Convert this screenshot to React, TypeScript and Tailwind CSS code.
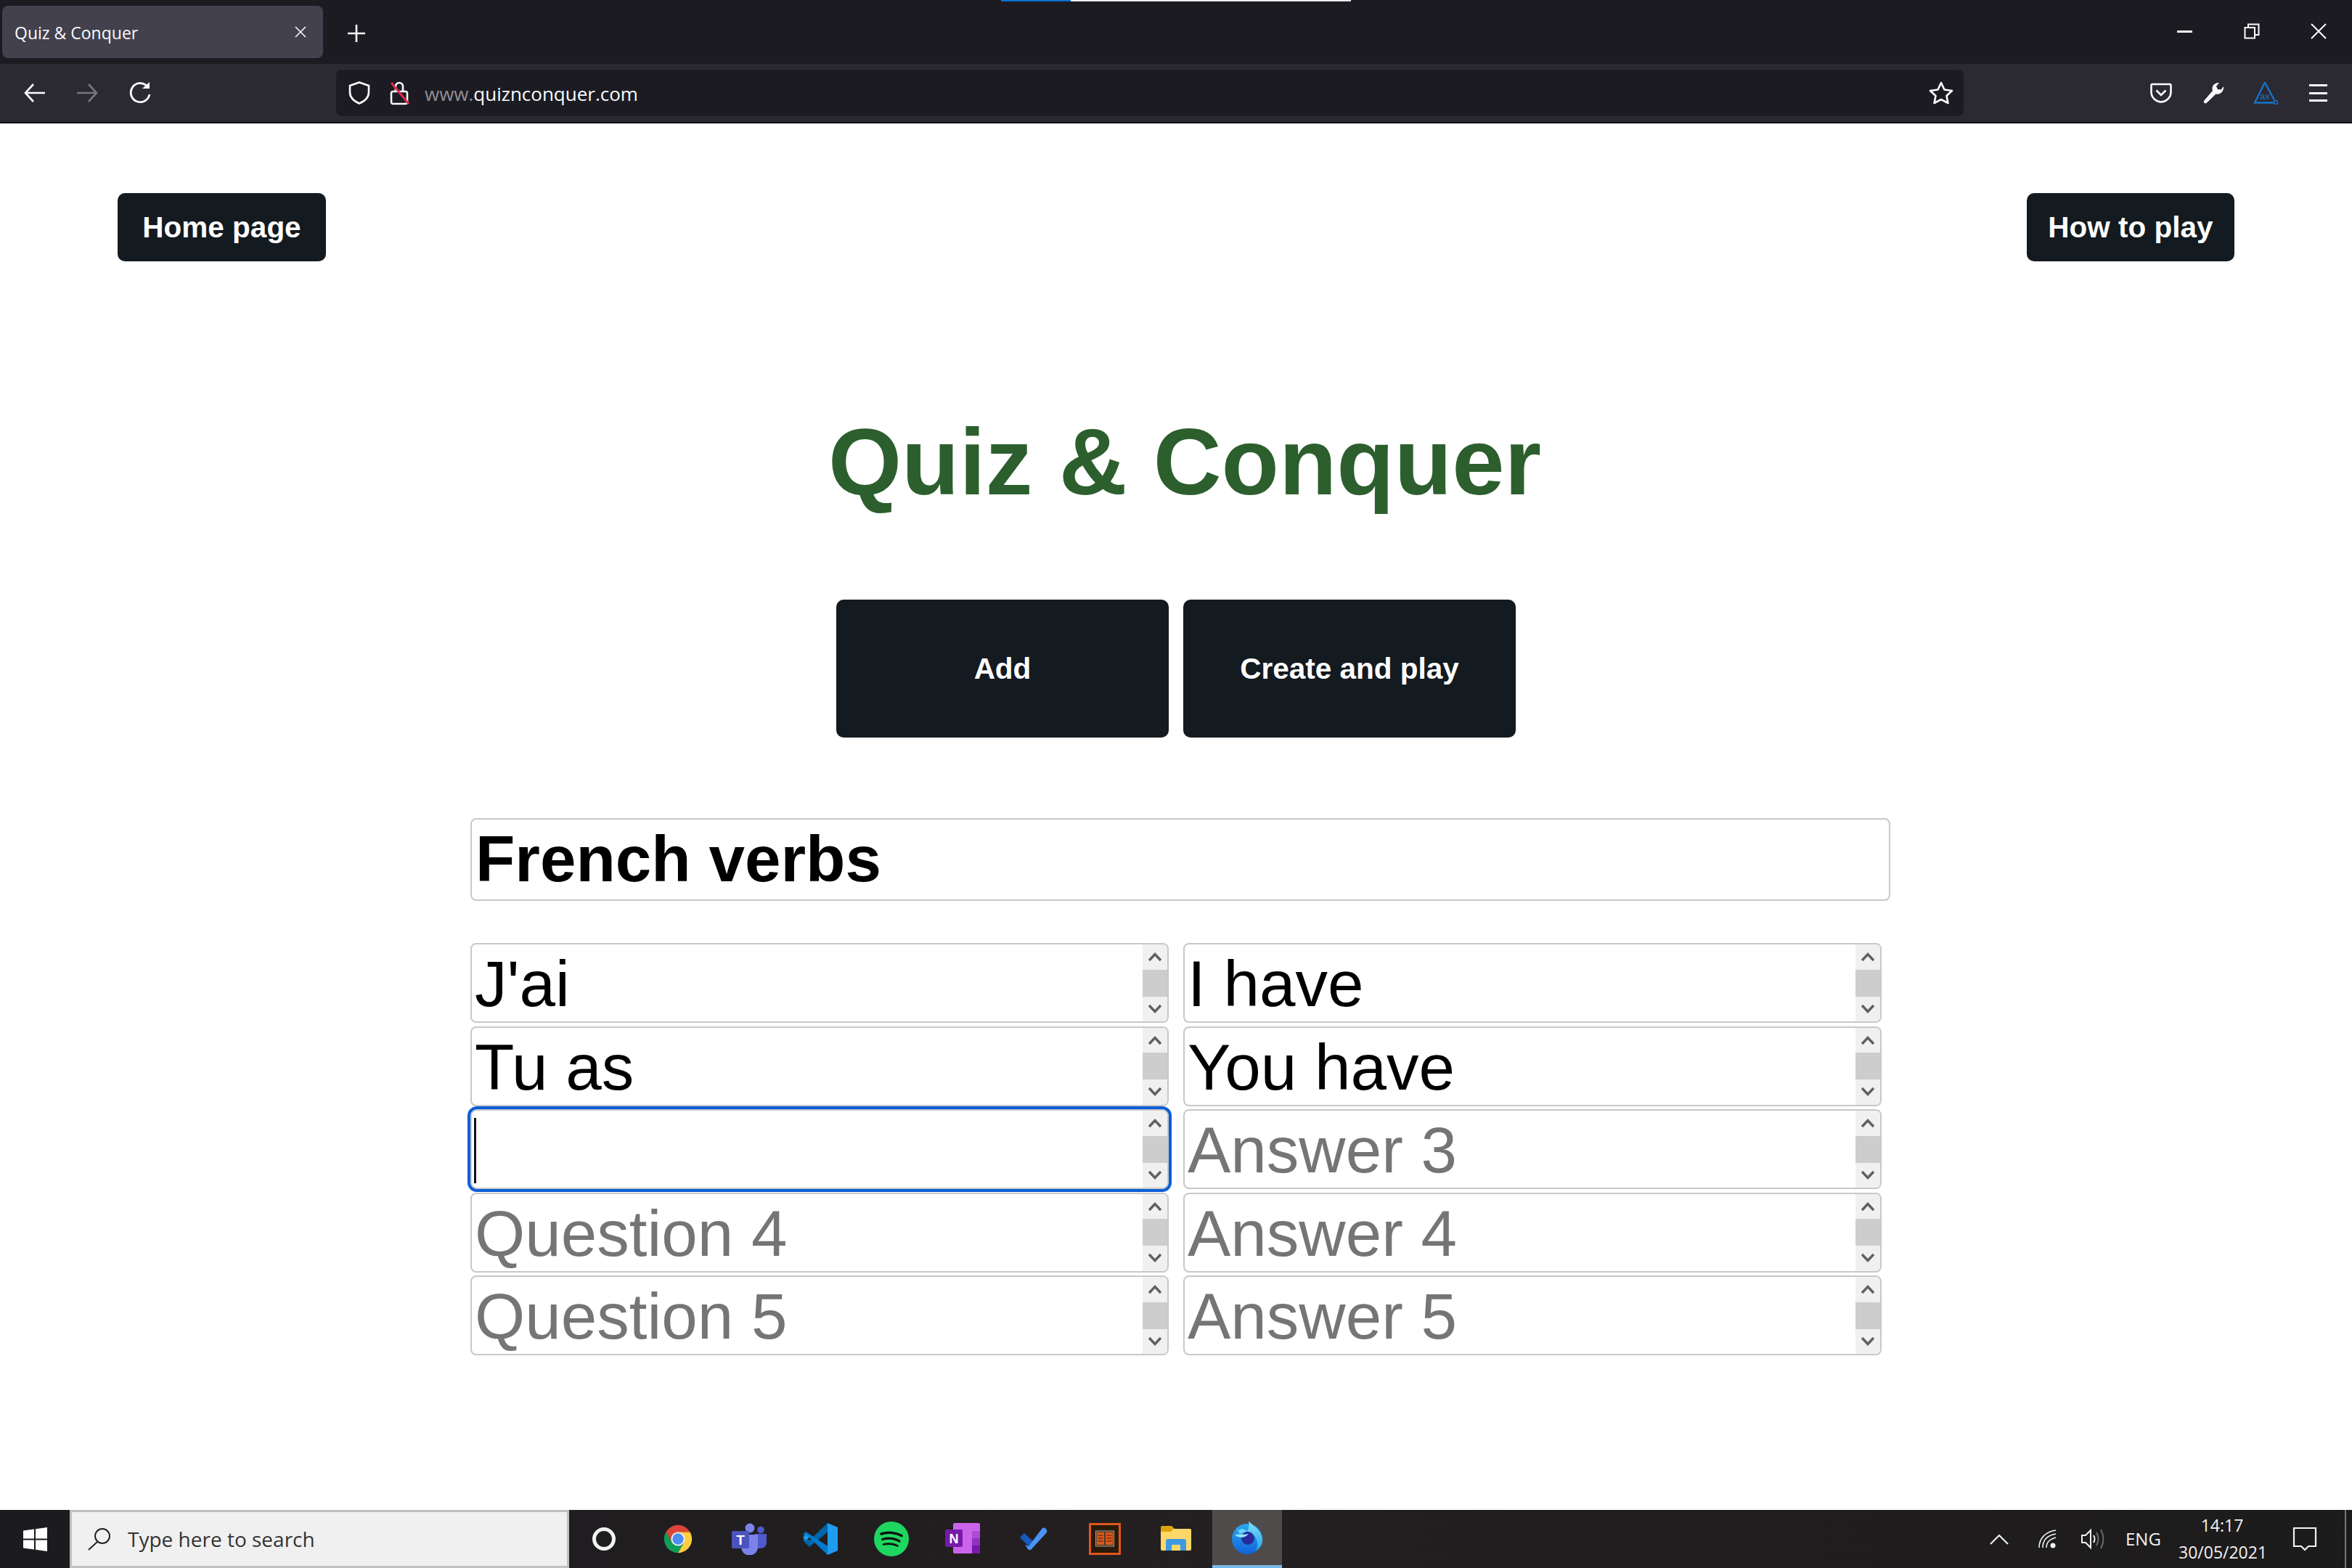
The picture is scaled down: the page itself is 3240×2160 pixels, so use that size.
import React from "react";

const sans = "font-['Liberation_Sans',Arial,sans-serif]";
const ui = "font-['Open_Sans',sans-serif]";

function ScrollBar() {
  return (
    <div className="w-[34px] shrink-0 flex flex-col h-full">
      <div className="flex-1 bg-[#f0f0f0] flex items-center justify-center">
        <svg width="18" height="14" viewBox="0 0 18 14" fill="none">
          <path d="M1 12 L9 3.5 L17 12" stroke="#606060" strokeWidth="3.5" />
        </svg>
      </div>
      <div className="h-[37px] bg-[#cdcdcd]" />
      <div className="flex-1 bg-[#f0f0f0] flex items-center justify-center">
        <svg width="18" height="14" viewBox="0 0 18 14" fill="none">
          <path d="M1 2 L9 10.5 L17 2" stroke="#606060" strokeWidth="3.5" />
        </svg>
      </div>
    </div>
  );
}

function Cell({ value, placeholder, focused }: { value?: string; placeholder?: string; focused?: boolean }) {
  return (
    <div
      className={
        "relative h-[110px] flex border-2 border-[#c8c8c8] rounded-[8px] overflow-hidden bg-white " +
        (focused ? "outline-[4px] outline-[#0b5ed7] outline-offset-0 border-[#c0d0e8] rounded-[9px] z-10" : "")
      }
    >
      <textarea
        readOnly
        value={value ?? ""}
        placeholder={placeholder}
        rows={1}
        className={
          sans +
          " flex-1 min-w-0 h-full resize-none overflow-hidden outline-none pl-[4px] pt-[3px] text-[89px] leading-[102px] text-black placeholder:text-[#757575]"
        }
      />
      {focused && <div className="absolute left-[3px] top-[10px] w-[3px] h-[90px] bg-[#111]" />}
      <ScrollBar />
    </div>
  );
}

function BackIcon({ color = "#fbfbfe", flip }: { color?: string; flip?: boolean }) {
  return (
    <svg width="30" height="28" viewBox="0 0 30 28" fill="none" className={flip ? "rotate-180" : ""}>
      <path d="M13 2 L2 14 L13 26 M2.5 14 H29" stroke={color} strokeWidth="2.6" />
    </svg>
  );
}

function TopBar() {
  return (
    <div className="h-[168px] bg-[#1c1b22] flex flex-col">
      <div className="h-[2px] flex ml-[1379px]">
        <div className="w-[96px] bg-[#0b6fd0]" />
        <div className="w-[386px] bg-[#ececec]" />
      </div>
      <div className="h-[86px] flex items-start pt-[6px] pl-[3px]">
        <div className="w-[442px] h-[72px] bg-[#42414d] rounded-[8px] flex items-center pl-[17px] pr-[23px] justify-between">
          <span className={ui + " text-[23px] mt-[2px] text-[#fbfbfe]"}>Quiz &amp; Conquer</span>
          <svg width="16" height="16" viewBox="0 0 16 16" fill="none">
            <path d="M1 1 L15 15 M15 1 L1 15" stroke="#fbfbfe" strokeWidth="1.6" />
          </svg>
        </div>
        <svg width="24" height="24" viewBox="0 0 24 24" fill="none" className="ml-[34px] mt-[26px]">
          <path d="M12 0 V24 M0 12 H24" stroke="#fbfbfe" strokeWidth="2.6" />
        </svg>
        <div className="ml-auto flex items-center mt-[24px] pr-[35px]">
          <div className="w-[21px] h-[3px] bg-[#fbfbfe]" />
          <svg width="22" height="22" viewBox="0 0 22 22" fill="none" className="ml-[71px]">
            <path d="M1.5 6 H15 V20.5 H1.5 Z M6 6 V1.5 H20.5 V16 H15" stroke="#fbfbfe" strokeWidth="2" />
          </svg>
          <svg width="22" height="22" viewBox="0 0 22 22" fill="none" className="ml-[70px]">
            <path d="M1 1 L21 21 M21 1 L1 21" stroke="#fbfbfe" strokeWidth="2" />
          </svg>
        </div>
      </div>
      <div className="h-[80px] bg-[#2b2a33] flex items-center pl-[33px] pr-[34px]">
        <BackIcon />
        <div className="ml-[42px]">
          <BackIcon color="#77767d" flip />
        </div>
        <svg width="30" height="30" viewBox="0 0 30 30" fill="none" className="ml-[43px]">
          <path d="M24 5 A13 13 0 1 0 28 17" stroke="#fbfbfe" strokeWidth="2.8" />
          <path d="M18 9 H28 V0 Z" fill="#fbfbfe" />
        </svg>
        <div className="ml-[255px] flex-1 h-[64px] bg-[#1c1b22] rounded-[8px] flex items-center pl-[17px] pr-[14px] max-w-[2245px]">
          <svg width="30" height="32" viewBox="0 0 30 32" fill="none">
            <path d="M15 1.5 L28 6 V15 C28 23 21 28 15 30.5 C9 28 2 23 2 15 V6 Z" stroke="#fbfbfe" strokeWidth="2.6" />
          </svg>
          <svg width="30" height="34" viewBox="0 0 30 34" fill="none" className="ml-[26px]">
            <rect x="3" y="15" width="22" height="17" rx="2.5" stroke="#fbfbfe" strokeWidth="2.6" />
            <path d="M9 15 V8 A5 5 0 0 1 19 8 V15" stroke="#fbfbfe" strokeWidth="2.6" />
            <path d="M3 3 L27 32" stroke="#e22850" strokeWidth="3" />
          </svg>
          <span className={ui + " ml-[19px] text-[26px] leading-none mt-[2px] text-[#fbfbfe]"}>
            <span className="text-[#8f8f96]">www.</span>quiznconquer.com
          </span>
          <svg width="34" height="32" viewBox="0 0 34 32" fill="none" className="ml-auto">
            <path
              d="M17 2 L21.5 11.5 L32 13 L24.5 20 L26.5 30 L17 25 L7.5 30 L9.5 20 L2 13 L12.5 11.5 Z"
              stroke="#fbfbfe"
              strokeWidth="2.6"
              strokeLinejoin="round"
            />
          </svg>
        </div>
        <svg width="30" height="28" viewBox="0 0 30 28" fill="none" className="ml-[257px]">
          <path d="M3 2 H27 Q28.5 2 28.5 4 V13 C28.5 21 21 26.5 15 26.5 C9 26.5 1.5 21 1.5 13 V4 Q1.5 2 3 2 Z" stroke="#fbfbfe" strokeWidth="2.6" />
          <path d="M8.5 10.5 L15 17 L21.5 10.5" stroke="#fbfbfe" strokeWidth="2.6" />
        </svg>
        <svg width="30" height="30" viewBox="0 0 30 30" className="ml-[42px]">
          <path
            d="M2 26 L14 12 C12 6 16 1 23 1 L19 6 L21 10 L25.5 10.5 L29 6 C30 12 25 18 18.5 16.5 L5.5 29 C3.5 30 1 28 2 26 Z"
            fill="#fbfbfe"
          />
        </svg>
        <svg width="34" height="32" viewBox="0 0 34 32" fill="none" className="ml-[40px]">
          <path d="M16 1.5 L29 26 M16 1.5 L2 29.5 H28" stroke="#1773c6" strokeWidth="2.4" />
          <circle cx="31" cy="29" r="2.5" stroke="#1773c6" strokeWidth="1.6" />
          <text x="9" y="25" fontSize="13" fill="#1773c6" fontFamily="Liberation Sans">ax</text>
        </svg>
        <div className="ml-[43px] w-[25px] h-[24px] flex flex-col justify-between">
          <div className="h-[3px] bg-[#fbfbfe]" />
          <div className="h-[3px] bg-[#fbfbfe]" />
          <div className="h-[3px] bg-[#fbfbfe]" />
        </div>
      </div>
    </div>
  );
}

function Chrome() {
  return (
    <svg width="46" height="46" viewBox="0 0 48 48">
      <path d="M6.7 14 A20 20 0 0 1 41.3 14 L24 14 L15.3 29 Z" fill="#db4437" />
      <path d="M6.7 14 A20 20 0 0 0 24 44 L32.7 29 L15.3 29 Z" fill="#0f9d58" />
      <path d="M41.3 14 A20 20 0 0 1 24 44 L32.7 29 L24 14 Z" fill="#ffcd40" />
      <circle cx="24" cy="24" r="10" fill="#f1f1f1" />
      <circle cx="24" cy="24" r="8" fill="#4d8df5" />
    </svg>
  );
}

function Teams() {
  return (
    <svg width="48" height="44" viewBox="0 0 48 44">
      <circle cx="25" cy="7" r="6.5" fill="#7b83eb" />
      <circle cx="40" cy="9.5" r="4.8" fill="#5059c9" />
      <path d="M32 15 H48 V27 A8 8 0 0 1 40 35 H32 Z" fill="#5059c9" />
      <path d="M13 16 H36 V33 A11.5 11.5 0 0 1 13 33 Z" fill="#7b83eb" />
      <rect x="0" y="11" width="24" height="24" rx="2" fill="#4b53bc" />
      <text x="12" y="30" textAnchor="middle" fontSize="19" fontWeight="700" fill="#fff" fontFamily="Liberation Sans">T</text>
    </svg>
  );
}

function VsCode() {
  return (
    <svg width="48" height="48" viewBox="0 0 48 48">
      <path d="M34 2 L9 26 L4 22 L0 26 L9 35 L36 13 Z" fill="#0065a9" />
      <path d="M0 18 L4 14 L36 35 L34 46 L9 22 Z" fill="#007acc" />
      <path d="M0 22 L4 18 L9 22 L4 26 Z" fill="#1f9cf0" />
      <path d="M34 2 L48 8 V40 L34 46 Z" fill="#1f9cf0" />
    </svg>
  );
}

function Spotify() {
  return (
    <svg width="48" height="48" viewBox="0 0 48 48" fill="none">
      <circle cx="24" cy="24" r="24" fill="#1ed760" />
      <path d="M10 17 C19 14 30 15 38 19.5" stroke="#111" strokeWidth="3.6" strokeLinecap="round" />
      <path d="M11.5 24.5 C19 22.5 28 23 35 27" stroke="#111" strokeWidth="3.2" strokeLinecap="round" />
      <path d="M13 31.5 C20 30 27 30.5 32.5 33.5" stroke="#111" strokeWidth="2.6" strokeLinecap="round" />
    </svg>
  );
}

function OneNote() {
  return (
    <svg width="48" height="44" viewBox="0 0 48 44">
      <rect x="11" y="0" width="37" height="42" rx="2" fill="#ca64ea" />
      <rect x="37" y="11" width="11" height="10" fill="#ae4bd5" />
      <rect x="37" y="21" width="11" height="10" fill="#9332bf" />
      <path d="M37 31 H48 V40 A2 2 0 0 1 46 42 H37 Z" fill="#7719aa" />
      <rect x="0" y="9" width="24" height="24" rx="2" fill="#7719aa" />
      <text x="12" y="28" textAnchor="middle" fontSize="18" fontWeight="700" fill="#fff" fontFamily="Liberation Sans">N</text>
    </svg>
  );
}

function Todo() {
  return (
    <svg width="38" height="32" viewBox="0 0 38 32">
      <path d="M0 14 L6 8 L18 19 L12 26 Z" fill="#195abd" />
      <path d="M12 26 L31 1 Q33 0 35 1 L37 4 Q38 6 37 7 L15 31 Q13 32 11 30 L7 24 Z" fill="#4a94f5" />
    </svg>
  );
}

function BookIcon() {
  return (
    <svg width="44" height="44" viewBox="0 0 44 44" fill="none">
      <rect x="1.5" y="1.5" width="41" height="41" fill="#2a1a0a" stroke="#e0561c" strokeWidth="3" />
      <rect x="9.5" y="11" width="25" height="21" fill="#4a3a28" stroke="#b0a494" strokeWidth="1" />
      <rect x="11" y="13" width="10" height="17" fill="#e0561c" />
      <rect x="23" y="13" width="10" height="17" fill="#e0561c" />
      <path d="M12.5 17 H19.5 M12.5 21 H19.5 M12.5 25 H19.5 M24.5 17 H31.5 M24.5 21 H31.5 M24.5 25 H31.5" stroke="#3a1c08" strokeWidth="1.2" />
    </svg>
  );
}

function Folder() {
  return (
    <svg width="42" height="36" viewBox="0 0 42 36">
      <path d="M0 2 Q0 0 2 0 H15 L19 4 V10 H0 Z" fill="#dba40c" />
      <path d="M0 11 V32 Q0 34 2 34 H40 Q42 34 42 32 V6 Q42 4 40 4 H18 L14 8 H0 Z" fill="#fdd768" />
      <path d="M7 34 V21 Q7 18 10 18 H32 Q35 18 35 21 V34 H27 V26 H15 V34 Z" fill="#3d9ae2" />
      <rect x="15" y="26" width="12" height="8" fill="#fdd768" />
    </svg>
  );
}

function Firefox() {
  return (
    <svg width="44" height="46" viewBox="0 0 44 46">
      <defs>
        <linearGradient id="ff" x1="0" y1="0" x2="0" y2="1">
          <stop offset="0" stopColor="#2ca8ee" />
          <stop offset="1" stopColor="#1164d8" />
        </linearGradient>
        <linearGradient id="ff2" x1="0" y1="0" x2="0" y2="1">
          <stop offset="0" stopColor="#7fe1fb" />
          <stop offset="1" stopColor="#22a4ea" />
        </linearGradient>
      </defs>
      <circle cx="22" cy="25" r="21" fill="url(#ff)" />
      <path d="M24 0 C28 6 40 10 43 24 C44 32 40 38 34 41 C39 32 36 20 22 14 C25 10 25 5 24 0 Z" fill="url(#ff2)" />
      <path d="M6 8 L10 13 C14 10 18 11 22 14 L12 18 Z" fill="#6fd2f7" />
      <circle cx="23" cy="24" r="9" fill="#2a2a9a" />
      <path d="M5 20 C10 17 18 20 24 18 C20 23 14 25 5 20 Z" fill="#8fe3fb" />
    </svg>
  );
}

function TaskBar() {
  return (
    <div className="h-[80px] shrink-0 flex items-stretch bg-linear-to-r from-[#1b1b1f] via-[#241f20] to-[#1c1b1c]">
      <div className="w-[96px] flex items-center pl-[32px]">
        <svg width="33" height="33" viewBox="0 0 33 33">
          <path d="M0 4.5 L15 2.5 V15.5 H0 Z M17 2.2 L33 0 V15.5 H17 Z M0 17.5 H15 V30.5 L0 28.5 Z M17 17.5 H33 V33 L17 30.8 Z" fill="#fff" />
        </svg>
      </div>
      <div className="w-[688px] bg-[#f0f0f0] border-x-[3px] border-t-[3px] border-b-[3px] border-[#c0c0c0] flex items-center pl-[21px]">
        <svg width="34" height="32" viewBox="0 0 34 32" fill="none">
          <circle cx="21" cy="12" r="10" stroke="#222" strokeWidth="2" />
          <path d="M14 20 L2 31" stroke="#222" strokeWidth="2" />
        </svg>
        <span className={ui + " ml-[22px] text-[28px] text-[#333]"}>Type here to search</span>
      </div>
      <div className="flex items-center pl-[32px] flex-1">
        <div className="w-[32px] h-[32px] rounded-full border-[5px] border-[#f2f2f2]" />
        <div className="ml-[63px]"><Chrome /></div>
        <div className="ml-[51px]"><Teams /></div>
        <div className="ml-[50px]"><VsCode /></div>
        <div className="ml-[50px]"><Spotify /></div>
        <div className="ml-[50px]"><OneNote /></div>
        <div className="ml-[55px]"><Todo /></div>
        <div className="ml-[57px]"><BookIcon /></div>
        <div className="ml-[55px]"><Folder /></div>
        <div className="ml-[29px] w-[96px] self-stretch bg-[#4f4b4b] border-b-[4px] border-[#76b9ed] flex items-center justify-center">
          <Firefox />
        </div>
        <div className="ml-auto flex items-center text-[#f2f2f2]">
          <svg width="26" height="15" viewBox="0 0 26 15" fill="none">
            <path d="M1 14 L13 2 L25 14" stroke="#f2f2f2" strokeWidth="2" />
          </svg>
          <svg width="26" height="26" viewBox="0 0 26 26" fill="none" className="ml-[41px]">
            <path d="M1 25 C1 12 10 3 24 1 M6 25 C6 15 12 8 24 6 M11 25 C11 18 16 13 24 11" stroke="#f2f2f2" strokeWidth="1.6" />
            <circle cx="20" cy="22" r="3.5" fill="#f2f2f2" />
          </svg>
          <svg width="32" height="30" viewBox="0 0 32 30" fill="none" className="ml-[33px]">
            <path d="M1 10 H6 L13 3 V27 L6 20 H1 Z" stroke="#f2f2f2" strokeWidth="2" />
            <path d="M17 10 Q20 15 17 20" stroke="#f2f2f2" strokeWidth="2" />
            <path d="M21 6 Q26 15 21 24 M27 2 Q34 15 27 28" stroke="#6b6b6b" strokeWidth="2" />
          </svg>
          <span className={ui + " ml-[29px] text-[24px] w-[46px] leading-none"}>ENG</span>
          <div className={ui + " ml-[27px] w-[120px] text-[23px] leading-[37px] text-center"}>
            <div>14:17</div>
            <div>30/05/2021</div>
          </div>
          <svg width="34" height="34" viewBox="0 0 34 34" fill="none" className="ml-[37px]">
            <path d="M2 2 H32 V27 H22 L17 32 L12 27 H2 Z" stroke="#f2f2f2" strokeWidth="2.2" />
          </svg>
          <div className="ml-[38px] w-[2px] h-[80px] bg-[#777]" />
          <div className="w-[8px]" />
        </div>
      </div>
    </div>
  );
}

const DarkBtn = "bg-[#131a20] text-white font-bold rounded-[10px] flex items-center justify-center " + sans;

export default function App() {
  return (
    <div className="w-[3240px] h-[2160px] flex flex-col bg-white overflow-hidden">
      <TopBar />
      <div className="h-[2px] bg-black shrink-0" />
      <div className="flex-1 flex flex-col">
        <div className="flex justify-between px-[162px] mt-[96px]">
          <button className={DarkBtn + " w-[287px] h-[94px] text-[40.5px]"}>Home page</button>
          <button className={DarkBtn + " w-[286px] h-[94px] text-[40.5px]"}>How to play</button>
        </div>
        <h1 className={sans + " mt-[201px] pl-[24px] text-center text-[130px] leading-[150px] font-bold text-[#2c5f2d]"}>
          Quiz &amp; Conquer
        </h1>
        <div className="flex justify-center gap-[20px] mt-[115px]">
          <button className={DarkBtn + " w-[458px] h-[190px] text-[40.5px]"}>Add</button>
          <button className={DarkBtn + " w-[458px] h-[190px] text-[40.5px]"}>Create and play</button>
        </div>
        <div className="ml-[648px] mt-[111px] w-[1956px]">
          <input
            readOnly
            value="French verbs"
            className={sans + " w-full h-[114px] border-2 border-[#c8c8c8] rounded-[8px] pl-[5px] text-[89px] font-bold text-black outline-none"}
          />
          <div className="mt-[58px] w-[1944px] grid grid-cols-2 gap-x-[20px] gap-y-[4.5px]">
            <Cell value="J'ai" />
            <Cell value="I have" />
            <Cell value="Tu as" />
            <Cell value="You have" />
            <Cell focused />
            <Cell placeholder="Answer 3" />
            <Cell placeholder="Question 4" />
            <Cell placeholder="Answer 4" />
            <Cell placeholder="Question 5" />
            <Cell placeholder="Answer 5" />
          </div>
        </div>
      </div>
      <TaskBar />
    </div>
  );
}
